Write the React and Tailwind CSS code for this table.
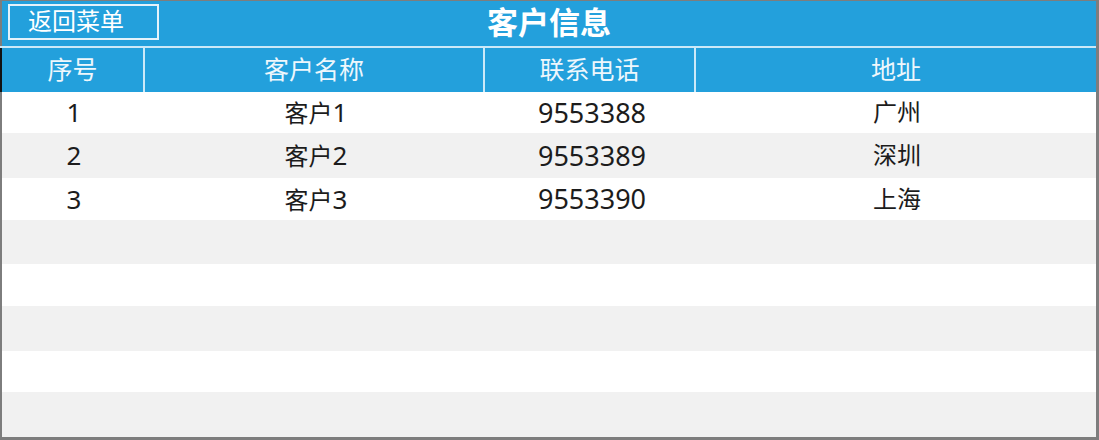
export default function App() {
  const rows = [
    { id: "1", name: "1", phone: "9553388", addr: "广州" },
    { id: "2", name: "2", phone: "9553389", addr: "深圳" },
    { id: "3", name: "3", phone: "9553390", addr: "上海" },
    null,
    null,
    null,
    null,
    null,
  ];
  const heights = ["h-[41px]", "h-[45px]", "h-[42px]", "h-[44px]", "h-[42px]", "h-[45px]", "h-[41px]", "h-[45px]"];
  const font = { fontFamily: '"Noto Sans", "Noto Sans CJK SC", sans-serif' };
  return (
    <div
      className="w-[1099px] h-[440px] flex flex-col bg-white border-t border-r-[3px] border-b-[3px] border-[#7d7d7d] overflow-hidden"
      style={font}
    >
      <div className="h-[45px] shrink-0 bg-[#23a0dc] border-l-2 border-[#7d7d7d] grid grid-cols-[1fr_auto_1fr] items-center">
        <div className="pl-[6px] pt-[3px] self-start">
          <div className="w-[151px] h-[36px] border-2 border-[#e4f2fb] text-white text-[24px] leading-none flex items-center pl-[18px] pb-[3px]">
            返回菜单
          </div>
        </div>
        <div className="text-white font-bold text-[31px] leading-none pb-[2px]">客户信息</div>
        <div />
      </div>
      <div className="h-[2px] shrink-0 bg-[#cbe9f8]" />
      <div className="h-[44px] shrink-0 bg-[#23a0dc] border-l-2 border-[#111] grid grid-cols-[143px_340px_211px_1fr] text-[#eef7fc] text-[25px] leading-none">
        <div className="flex items-center justify-center border-r-2 border-[#cbe9f8] pb-[2px]">序号</div>
        <div className="flex items-center justify-center border-r-2 border-[#cbe9f8] pb-[2px]">客户名称</div>
        <div className="flex items-center justify-center border-r-2 border-[#cbe9f8] pb-[2px]">联系电话</div>
        <div className="flex items-center justify-center pb-[2px]">地址</div>
      </div>
      <div className="flex-1 flex flex-col border-l-2 border-[#7d7d7d]">
        {rows.map((r, i) => (
          <div
            key={i}
            className={`${heights[i]} shrink-0 grid grid-cols-[144px_340px_212px_1fr] items-center text-[#1c1c1c] leading-none ${i % 2 === 1 ? "bg-[#f1f1f1]" : "bg-white"}`}
          >
            {r && (
              <>
                <div className="text-center text-[26px] pb-[1px]">{r.id}</div>
                <div className="text-center pb-[1px]">
                  <span className="text-[24px]">客户</span>
                  <span className="text-[26px]">{r.name}</span>
                </div>
                <div className="text-center text-[27px] pb-[1px]">{r.phone}</div>
                <div className="text-center text-[24px] pb-[1px]">{r.addr}</div>
              </>
            )}
          </div>
        ))}
      </div>
    </div>
  );
}
